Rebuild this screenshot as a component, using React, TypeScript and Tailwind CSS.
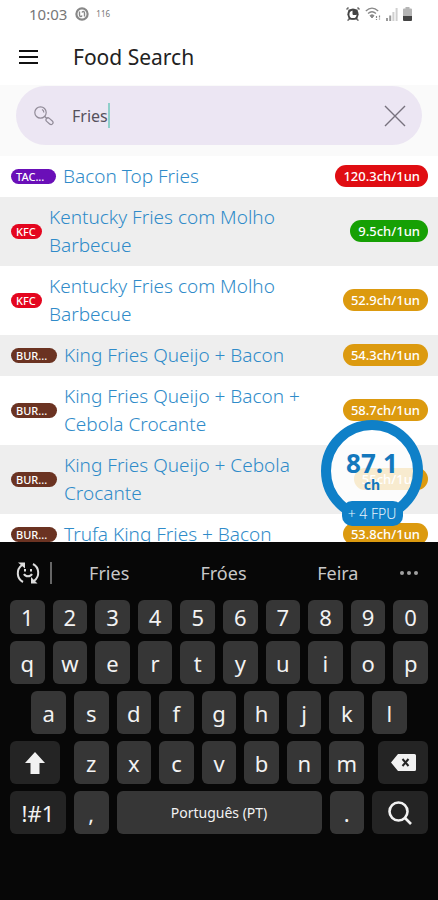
import React from "react";

type Food = { brand: string; brandColor: string; name: string; carbs: string; level: string };

const PURPLE = "bg-[#6a0fb8] w-[45px]";
const RED = "bg-[#e4061f] w-[31px]";
const BROWN = "bg-[#6b3322] w-[46px]";
const AMBER = "bg-[#dc9a0f]";

const foods: Food[] = [
  { brand: "TACO BELL", brandColor: PURPLE, name: "Bacon Top Fries", carbs: "120.3ch/1un", level: "bg-[#e00d12]" },
  { brand: "KFC", brandColor: RED, name: "Kentucky Fries com Molho Barbecue", carbs: "9.5ch/1un", level: "bg-[#16a004]" },
  { brand: "KFC", brandColor: RED, name: "Kentucky Fries com Molho Barbecue", carbs: "52.9ch/1un", level: AMBER },
  { brand: "BURGER KING", brandColor: BROWN, name: "King Fries Queijo + Bacon", carbs: "54.3ch/1un", level: AMBER },
  { brand: "BURGER KING", brandColor: BROWN, name: "King Fries Queijo + Bacon + Cebola Crocante", carbs: "58.7ch/1un", level: AMBER },
  { brand: "BURGER KING", brandColor: BROWN, name: "King Fries Queijo + Cebola Crocante", carbs: "55ch/1un", level: AMBER },
  { brand: "BURGER KING", brandColor: BROWN, name: "Trufa King Fries + Bacon", carbs: "53.8ch/1un", level: AMBER },
];

const shortBrand = (brand: string) => (brand.length > 3 ? brand.slice(0, 3) + "..." : brand);

function StatusBar() {
  return (
    <div className="flex h-7 items-center justify-between pl-[29px] pr-[26px] text-[#777]">
      <div className="flex items-center">
        <span className="text-[15px] leading-5">10:03</span>
        <svg className="ml-2 size-[14px]" viewBox="0 0 14 14" fill="none" stroke="#888">
          <circle cx="7" cy="7" r="5.6" strokeWidth="2.2" />
          <path d="M4.5 4.5v3.500c0 2 2 2 2.500 .5M9.500 9.500V6c0-2-2-2-2.500-.5" strokeWidth="1.400" />
        </svg>
        <span className="ml-[7px] text-[8px] leading-3">116</span>
      </div>
      <div className="flex items-center gap-[5px]">
        <svg className="size-[14px]" viewBox="0 0 14 14">
          <path d="M2.500 2.500h9v10h-9z" fill="#444" />
          <circle cx="7" cy="7.200" r="5.600" fill="#444" />
          <path d="M.5 2.500l2-2M13.500 2.500l-2-2M1.500 13.500l2-1.500M12.500 13.500l-2-1.500" stroke="#666" strokeWidth="1.500" />
          <path d="M7 3.800a3.600 3.600 0 1 0 3.600 3.600H7z" fill="#fff" />
          <path d="M7 4v3.500h3.500" stroke="#444" strokeWidth="1" fill="none" />
        </svg>
        <svg className="h-[14px] w-4" viewBox="0 0 16 14" fill="none" stroke="#888">
          <path d="M.8 4c4-3.700 8.400-3.700 12.400 0M3 6.500c2.600-2.300 5.400-2.300 8 0" strokeWidth="1.300" />
          <path d="M5 8.500q2-1.500 4 0L7 11z" fill="#888" />
          <path d="M11.500 9v4M14.500 8.500v4" strokeWidth="1.200" strokeDasharray="2 1" />
        </svg>
        <svg className="h-[14px] w-3" viewBox="0 0 12 14">
          <path d="M0 11h2v3H0zM3.200 8.500h2V14h-2z" fill="#999" />
          <path d="M6.400 5h2v9h-2zM9.600 1h2v13h-2z" fill="#d0d0d0" />
        </svg>
        <svg className="h-[14px] w-[9px]" viewBox="0 0 9 14">
          <path d="M2.500 0h4v1.500H8a1 1 0 0 1 1 1V9H0V2.500a1 1 0 0 1 1-1h1.500z" fill="#b5b5b5" />
          <path d="M0 9h9v4a1 1 0 0 1-1 1H1a1 1 0 0 1-1-1z" fill="#444" />
        </svg>
      </div>
    </div>
  );
}

function FoodRow({ food }: { food: Food }) {
  return (
    <li className="flex items-center bg-white pt-[6px] pr-[10px] pb-[7px] pl-[11px] even:bg-[#eeeeee]">
      <span
        title={food.brand}
        className={"h-[15px] shrink-0 rounded-full pl-[5px] text-[11px] leading-[15px] font-medium text-white " + food.brandColor}
      >
        {shortBrand(food.brand)}
      </span>
      <a href="#food" className="ml-[7px] min-w-0 flex-1 text-[19px] leading-7 font-light text-[#2f8bc9]">
        {food.name}
      </a>
      <span className={"ml-2 h-[22px] shrink-0 rounded-full px-2 text-[13px] leading-[22px] font-medium text-white " + food.level}>
        {food.carbs}
      </span>
    </li>
  );
}

const keyBase = "flex items-center justify-center rounded-[6px] text-[22px] leading-7 text-[#f2f2f2] ";
const letterKey = keyBase + "w-[calc((100%-72px)/10)] shrink-0 bg-[#363636] ";
const sideKey = keyBase + "flex-1 bg-[#242424] ";

function Keys({ letters }: { letters: string }) {
  return (
    <>
      {letters.split("").map((l) => (
        <button key={l} type="button" className={letterKey}>
          {l}
        </button>
      ))}
    </>
  );
}

function Keyboard() {
  return (
    <section aria-label="Keyboard" className="bg-[#070707] pb-[66px]">
      <div className="flex h-[58px] items-center pt-1">
        <button type="button" aria-label="Emoji" className="flex w-[50px] pl-4">
          <svg className="size-6" viewBox="0 0 24 24" fill="none" stroke="#dcdcdc" strokeWidth="2">
            <path d="M7 21C.5 17.500 0 8.500 6 4M17 3c6.500 3.500 7 12.500 1 17" />
            <path d="M2 1.500h7v6z" fill="#dcdcdc" stroke="none" />
            <path d="M15 16v6.500h6.500z" fill="#dcdcdc" stroke="none" />
            <path d="M8 13c1.500 3 6.500 3 8 0" />
            <path d="M9 8v2.500M15 8v2.500" />
          </svg>
        </button>
        <span className="h-[22px] w-[2px] bg-[#666]" />
        {["Fries", "Fróes", "Feira"].map((w) => (
          <button key={w} type="button" className="flex-1 text-[18px] leading-6 text-[#c8c8c8]">
            {w}
          </button>
        ))}
        <button type="button" aria-label="More" className="flex w-[43px] gap-[3px] pl-[5px]">
          <span className="size-1 rounded-full bg-[#a0a0a0]" />
          <span className="size-1 rounded-full bg-[#a0a0a0]" />
          <span className="size-1 rounded-full bg-[#a0a0a0]" />
        </button>
      </div>
      <div className="flex flex-col gap-[7px] px-[10px]">
        <div className="flex h-[34px] gap-2">
          <Keys letters="1234567890" />
        </div>
        <div className="flex h-[43px] gap-2">
          <Keys letters="qwertyuiop" />
        </div>
        <div className="flex h-[43px] justify-center gap-2">
          <Keys letters="asdfghjkl" />
        </div>
        <div className="flex h-[43px] gap-2">
          <button type="button" aria-label="Shift" className={sideKey + "mr-[6px]"}>
            <svg className="h-[22px] w-5" viewBox="0 0 20 22" fill="#f2f2f2">
              <path d="M10 0l10 11h-5.500v11h-9V11H0z" />
            </svg>
          </button>
          <Keys letters="zxcvbnm" />
          <button type="button" aria-label="Backspace" className={sideKey + "ml-[6px]"}>
            <svg className="h-[17px] w-[25px]" viewBox="0 0 25 17">
              <path d="M7 0h16.500A1.500 1.500 0 0 1 25 1.500v14a1.500 1.500 0 0 1-1.500 1.500H7L0 8.500z" fill="#f2f2f2" />
              <path d="M11.500 5l6 7M17.500 5l-6 7" stroke="#242424" strokeWidth="2" />
            </svg>
          </button>
        </div>
        <div className="flex h-[43px] gap-2">
          <button type="button" className={sideKey}>!#1</button>
          <Keys letters="," />
          <button
            type="button"
            className="w-[calc((100%-72px)/2+32px)] shrink-0 rounded-[6px] bg-[#363636] text-[14px] leading-5 text-[#f2f2f2]"
          >
            Português (PT)
          </button>
          <Keys letters="." />
          <button type="button" aria-label="Search" className={sideKey}>
            <svg className="size-6" viewBox="0 0 24 24" fill="none" stroke="#f2f2f2" strokeWidth="2.600">
              <circle cx="10.500" cy="10.500" r="9" />
              <path d="M17 17l6 6" />
            </svg>
          </button>
        </div>
      </div>
    </section>
  );
}

export default function App() {
  return (
    <div className="flex h-screen flex-col overflow-hidden bg-white font-['Noto_Sans','Open_Sans',sans-serif]">
      <StatusBar />
      <header className="flex h-[57px] items-center pl-[19px]">
        <button type="button" aria-label="Menu" className="flex w-[19px] flex-col gap-1">
          <span className="h-[2px] bg-[#111]" />
          <span className="h-[2px] bg-[#111]" />
          <span className="h-[2px] bg-[#111]" />
        </button>
        <h1 className="ml-[35px] text-[21px] leading-7 text-[#222]">Food Search</h1>
      </header>
      <div className="bg-[#fafafa] px-4 pt-px pb-[11px]">
        <div className="flex h-[59px] items-center rounded-full bg-[#ece6f3] pr-4 pl-[18px]">
          <svg className="size-5 shrink-0" viewBox="0 0 20 20" fill="none" stroke="#918b98" strokeWidth="1.200">
            <circle cx="6.500" cy="6.500" r="5.700" />
            <path d="M8 3.500q2 1 1.800 3M10.800 10.500l2 2" />
            <rect x="11.500" y="13.200" width="8" height="4" rx="2" transform="rotate(42 15.500 15.200)" />
          </svg>
          <input
            id="q"
            type="text"
            aria-label="Search food"
            defaultValue="Fries"
            className="ml-[18px] [field-sizing:content] bg-transparent text-[16px] leading-6 text-[#55515c] outline-none"
          />
          <span className="h-[25px] w-[2px] bg-[#8fcfca]" />
          <button type="button" aria-label="Clear" className="ml-auto">
            <svg className="size-[22px]" viewBox="0 0 22 22" stroke="#77727d" strokeWidth="1.400">
              <path d="M1 1l20 20M21 1L1 21" />
            </svg>
          </button>
        </div>
      </div>
      <main className="relative min-h-0 flex-1 overflow-hidden">
        <ul>
          {foods.map((f, i) => (
            <FoodRow key={i} food={f} />
          ))}
        </ul>
        <div className="absolute right-[15px] bottom-4 flex flex-col items-center">
          <div className="flex size-[102px] flex-col items-center justify-center rounded-full border-10 border-[#0f80c8] bg-white/80 font-bold text-[#1478bd]">
            <span className="text-[26px] leading-7">87.1</span>
            <span className="text-[14px] leading-4">ch</span>
          </div>
          <span className="-mt-[21px] h-[25px] w-[61px] rounded-[10px] bg-[#0f80c8] text-center text-[14px] leading-[25px] font-light text-[#e6f3fd]">
            + 4 FPU
          </span>
        </div>
      </main>
      <Keyboard />
    </div>
  );
}
